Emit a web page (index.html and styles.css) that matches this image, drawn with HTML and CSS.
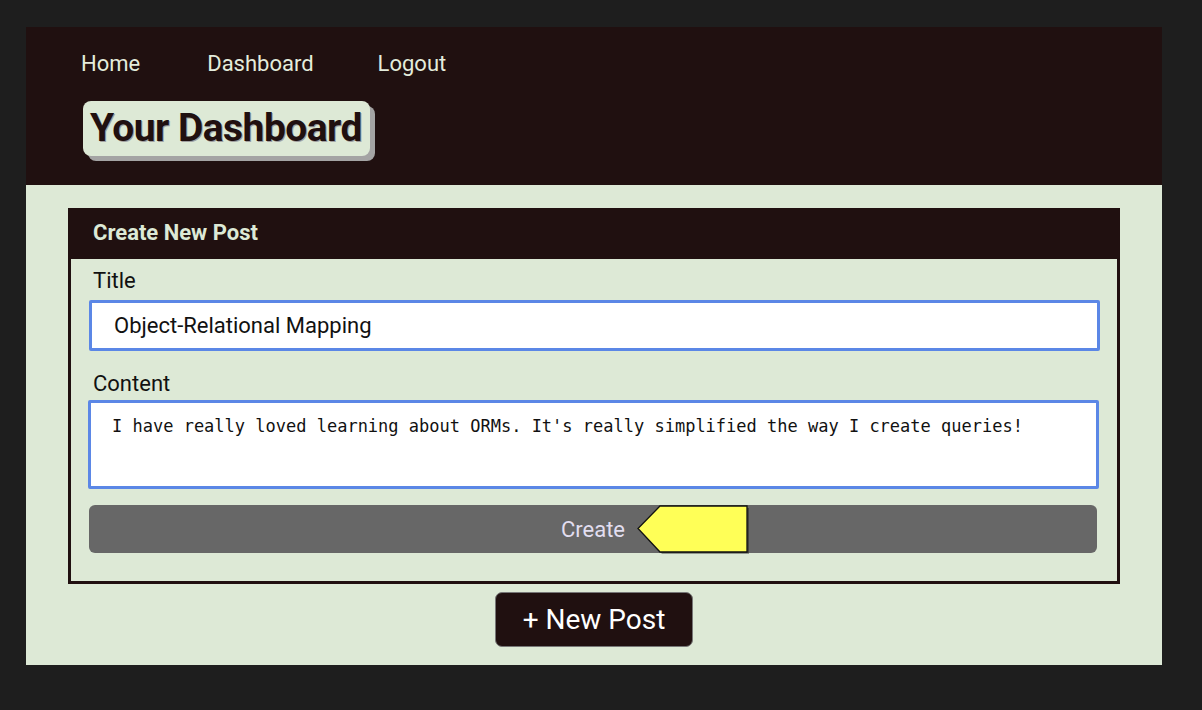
FILE: index.html
```html
<!DOCTYPE html>
<html lang="en">
<head>
<meta charset="utf-8">
<title>Your Dashboard</title>
<link rel="stylesheet" href="styles.css">
</head>
<body>
<div class="page">
  <header class="site-header">
    <nav class="nav">
      <a class="nav-link" href="#">Home</a>
      <a class="nav-link nav-dash" href="#">Dashboard</a>
      <a class="nav-link nav-out" href="#">Logout</a>
    </nav>
    <h1 class="badge">Your Dashboard</h1>
  </header>
  <main class="main">
    <section class="card">
      <div class="card-head">Create New Post</div>
      <form class="card-body">
        <label class="label label-title" for="title">Title</label>
        <input class="field" id="title" type="text" value="Object-Relational Mapping">
        <label class="label label-content" for="content">Content</label>
        <textarea class="area" id="content">I have really loved learning about ORMs. It's really simplified the way I create queries!</textarea>
        <div class="btn-wrap">
          <button class="create" type="button">Create</button>
          <svg class="pointer" width="114" height="51" viewBox="0 0 114 51">
            <polygon points="110,1 23,1 1,23.5 23,47 110,47" fill="#000" opacity="0.35" transform="translate(2,2)"/>
            <polygon points="110,1 23,1 1,23.5 23,47 110,47" fill="#ffff57" stroke="#111" stroke-width="1.3"/>
          </svg>
        </div>
      </form>
    </section>
    <button class="new-post" type="button">+ New Post</button>
  </main>
</div>
</body>
</html>
```
FILE: styles.css
```css
* { box-sizing: border-box; }
html, body { margin: 0; padding: 0; }
body {
  background: #1e1e1e;
  font-family: Roboto, "Noto Sans", Arial, sans-serif;
}
.page {
  margin: 27px 40px 45px 26px;
}
.site-header {
  background: #201010;
  padding: 24px 0 29px 55px;
}
.nav {
  display: flex;
  height: 26px;
  align-items: center;
}
.nav-link {
  color: #e4ecdc;
  text-decoration: none;
  font-size: 22px;
  line-height: 26px;
}
.nav-dash { margin-left: 67px; }
.nav-out { margin-left: 64px; }
.badge {
  display: inline-block;
  margin: 24px 0 0 2px;
  background: #dde9d6;
  color: #201010;
  font-size: 39px;
  font-weight: 700;
  line-height: 55px;
  height: 55px;
  padding: 0 8px 0 7px;
  border-radius: 8px;
  box-shadow: 5px 5px 0 #a4a4a4;
  text-shadow: 1px 1px 0 #a0a0a0;
  letter-spacing: -0.55px;
}
.main {
  background: #dde9d6;
  padding: 23px 42px 18px;
  display: flex;
  flex-direction: column;
  align-items: center;
}
.card {
  width: 100%;
  border: 3px solid #201010;
  border-top: 0;
  background: #dde9d6;
}
.card-head {
  background: #201010;
  color: #dde9d6;
  font-weight: 700;
  font-size: 22px;
  height: 51px;
  line-height: 49px;
  margin: 0 -3px;
  padding-left: 25px;
}
.card-body {
  display: flex;
  flex-direction: column;
  padding: 10px 17px 28px 18px;
  margin: 0;
}
.label {
  font-size: 22px;
  line-height: 24px;
  color: #111;
  padding-left: 4px;
}
.field {
  margin-top: 7px;
  height: 51px;
  border: 3px solid #5b87e6;
  border-radius: 2px;
  background: #fff;
  font-family: Roboto, "Noto Sans", Arial, sans-serif;
  font-size: 22px;
  color: #111;
  padding: 0 0 0 22px;
  outline: none;
  width: 1011px;
}
.label-content { margin-top: 21px; }
.area {
  margin-top: 4px;
  margin-left: -1px;
  height: 89px;
  width: 1011px;
  border: 3px solid #5b87e6;
  border-radius: 2px;
  background: #fff;
  font-family: "DejaVu Sans Mono", "Liberation Mono", monospace;
  font-size: 17px;
  line-height: 20px;
  color: #111;
  padding: 13px 0 0 21px;
  resize: none;
  outline: none;
}
.btn-wrap {
  position: relative;
  margin-top: 16px;
  width: 1008px;
}
.create {
  display: block;
  width: 100%;
  height: 48px;
  border: 0;
  border-radius: 6px;
  background: #676767;
  color: #e2def0;
  font-family: Roboto, "Noto Sans", Arial, sans-serif;
  font-size: 22px;
  padding: 0;
}
.pointer {
  position: absolute;
  left: 548px;
  top: 0;
}
.new-post {
  margin-top: 8px;
  width: 198px;
  height: 55px;
  background: #201010;
  color: #fff;
  border: 1px solid #777;
  border-radius: 7px;
  font-family: Roboto, "Noto Sans", Arial, sans-serif;
  font-size: 28px;
  padding: 0;
}
```
